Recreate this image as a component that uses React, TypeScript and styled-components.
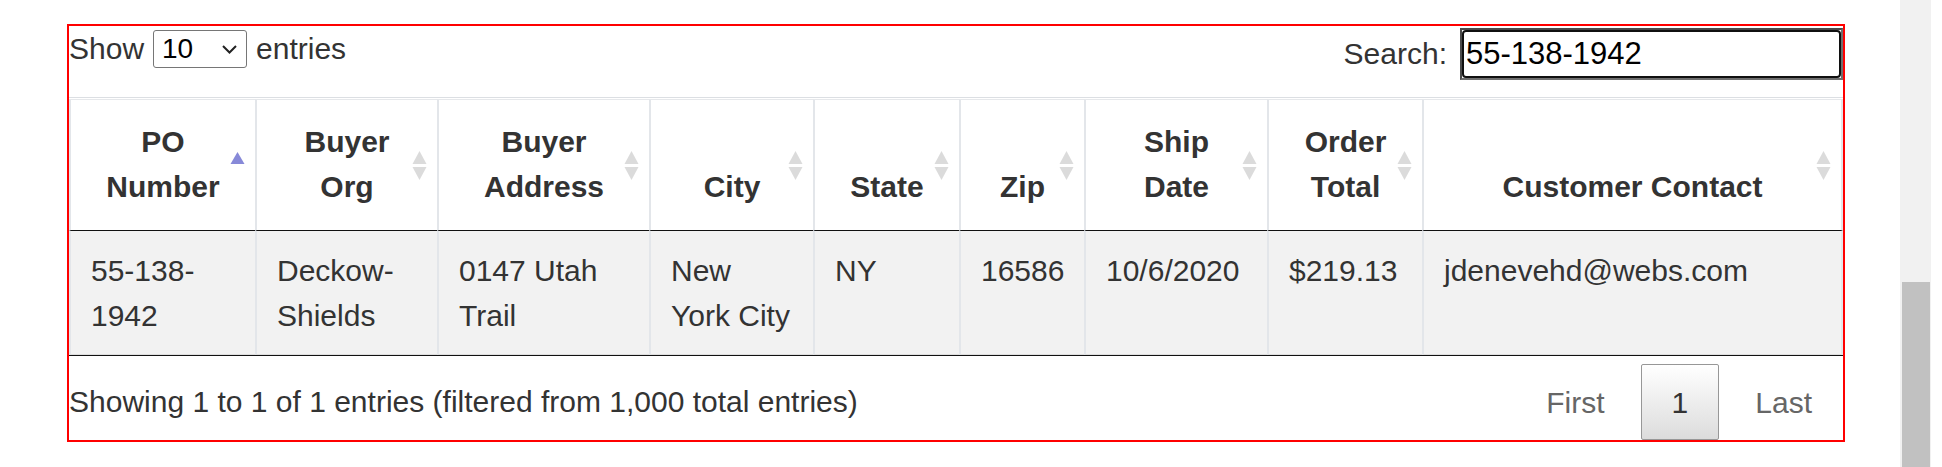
import styled, { createGlobalStyle } from "styled-components";

const GlobalStyle = createGlobalStyle`
  html, body {
    margin: 0;
    padding: 0;
    background: #fff;
  }
  body {
    font-family: "Liberation Sans", Arial, sans-serif;
    color: #333;
  }
`;

const Page = styled.div`
  display: flex;
  height: 467px;
  overflow: hidden;
`;

const Frame = styled.div`
  box-sizing: border-box;
  width: 1778px;
  margin: 24px 0 0 67px;
  border: 2px solid #ff0000;
  font-size: 30px;
  line-height: 45px;
  align-self: flex-start;
`;

const TopBar = styled.div`
  display: flex;
  justify-content: space-between;
  height: 71px;
`;

const LengthLabel = styled.label`
  display: flex;
  align-items: center;
  gap: 8px;
  height: 45px;
`;

const SelectWrap = styled.span`
  position: relative;
  display: inline-flex;
  margin: 0 1px;
`;

const LengthSelect = styled.select`
  box-sizing: border-box;
  width: 94px;
  height: 38px;
  padding: 0 0 0 8px;
  border: 1px solid #767676;
  border-radius: 3px;
  background: #fff;
  color: #000;
  font-family: "Liberation Sans", Arial, sans-serif;
  font-size: 28px;
  line-height: 36px;
  appearance: none;
  -webkit-appearance: none;
`;

const Chevron = styled.svg`
  position: absolute;
  right: 10px;
  top: 15px;
  pointer-events: none;
`;

const FilterLabel = styled.label`
  display: flex;
  align-items: baseline;
  gap: 13px;
  padding-top: 2px;
`;

const SearchBox = styled.span`
  display: inline-flex;
  border-style: solid;
  border-width: 2px;
  border-color: #4a4a4a #6f6f6f #6f6f6f #4a4a4a;
`;

const SearchInput = styled.input`
  box-sizing: border-box;
  width: 379px;
  height: 48px;
  padding: 0 2px;
  border: 2px solid #101010;
  border-radius: 4px;
  outline: none;
  background: #fff;
  color: #000;
  font-family: "Liberation Sans", Arial, sans-serif;
  font-size: 31px;
`;

const Table = styled.table`
  border-collapse: separate;
  border-spacing: 0;
  table-layout: fixed;
  width: 1774px;
  padding-top: 1px;
  border-top: 1px solid #dcdfe3;
  border-bottom: 1px solid #111;
`;

const HeadCell = styled.th<{ $w: number; $last?: boolean }>`
  position: relative;
  box-sizing: border-box;
  width: ${(p) => p.$w}px;
  padding: 19px 34px 21px;
  border-top: 1px solid #e6e8eb;
  border-left: 2px solid #e3e6ea;
  border-right: ${(p) => (p.$last ? "2px solid #e3e6ea" : "none")};
  border-bottom: 1px solid #111;
  font-weight: bold;
  text-align: center;
  vertical-align: bottom;
  color: #333;
`;

const SortIcon = styled.svg`
  position: absolute;
  right: 10px;
  top: 50%;
  margin-top: -14px;
`;

const Cell = styled.td<{ $last?: boolean }>`
  padding: 17px 18px 16px 20px;
  border-left: 2px solid #e3e6ea;
  border-right: ${(p) => (p.$last ? "2px solid #e3e6ea" : "none")};
  border-bottom: 1px solid #ddd;
  background: #f2f2f2;
  vertical-align: top;
  color: #333;
`;

const Footer = styled.div`
  display: flex;
  justify-content: space-between;
  align-items: flex-start;
`;

const Info = styled.div`
  padding-top: 23px;
`;

const Paginate = styled.div`
  display: flex;
  gap: 5px;
  padding-top: 8px;
`;

const PageButton = styled.a<{ $current?: boolean }>`
  display: block;
  padding: 15px 30px 14px;
  border: 1px solid ${(p) => (p.$current ? "#979797" : "transparent")};
  border-radius: 2px;
  background: ${(p) =>
    p.$current ? "linear-gradient(to bottom, #fff 0%, #dcdcdc 100%)" : "none"};
  color: ${(p) => (p.$current ? "#333" : "#666")};
  text-decoration: none;
  cursor: pointer;
`;

const Scrollbar = styled.div`
  display: flex;
  flex-direction: column;
  width: 31px;
  margin-left: auto;
  margin-right: 11px;
  background: #f1f1f1;
`;

const Thumb = styled.div`
  flex: 1;
  margin: 282px 1px 0 2px;
  background: #c1c1c1;
`;

const columns = [
  { label: "PO Number", w: 186, sort: "asc" },
  { label: "Buyer Org", w: 182 },
  { label: "Buyer Address", w: 212 },
  { label: "City", w: 164 },
  { label: "State", w: 146 },
  { label: "Zip", w: 125 },
  { label: "Ship Date", w: 183 },
  { label: "Order Total", w: 155 },
  { label: "Customer Contact", w: 421 },
];

const row = [
  "55-138-1942",
  "Deckow-Shields",
  "0147 Utah Trail",
  "New York City",
  "NY",
  "16586",
  "10/6/2020",
  "$219.13",
  "jdenevehd@webs.com",
];

function SortArrows({ dir }: { dir?: string }) {
  return (
    <SortIcon width="15" height="29" viewBox="0 0 15 29">
      {dir === "asc" ? (
        <polygon points="7.5,1 14.5,13 0.5,13" fill="#8789d8" />
      ) : (
        <>
          <polygon points="7.5,0 14.5,13 0.5,13" fill="#dbdbdb" />
          <polygon points="0.5,16 14.5,16 7.5,29" fill="#dbdbdb" />
        </>
      )}
    </SortIcon>
  );
}

export default function App() {
  return (
    <>
      <GlobalStyle />
      <Page>
        <Frame>
          <TopBar>
            <LengthLabel>
              <span>Show</span>
              <SelectWrap>
                <LengthSelect defaultValue="10">
                  <option value="10">10</option>
                  <option value="25">25</option>
                  <option value="50">50</option>
                  <option value="100">100</option>
                </LengthSelect>
                <Chevron width="15" height="9" viewBox="0 0 15 9">
                  <polyline
                    points="1,1 7.5,7.5 14,1"
                    fill="none"
                    stroke="#222"
                    strokeWidth="2"
                  />
                </Chevron>
              </SelectWrap>
              <span>entries</span>
            </LengthLabel>
            <FilterLabel>
              <span>Search:</span>
              <SearchBox>
                <SearchInput type="search" defaultValue="55-138-1942" />
              </SearchBox>
            </FilterLabel>
          </TopBar>
          <Table>
            <thead>
              <tr>
                {columns.map((c, i) => (
                  <HeadCell key={c.label} $w={c.w} $last={i === columns.length - 1}>
                    {c.label}
                    <SortArrows dir={c.sort} />
                  </HeadCell>
                ))}
              </tr>
            </thead>
            <tbody>
              <tr>
                {row.map((v, i) => (
                  <Cell key={i} $last={i === row.length - 1}>
                    {v}
                  </Cell>
                ))}
              </tr>
            </tbody>
          </Table>
          <Footer>
            <Info>Showing 1 to 1 of 1 entries (filtered from 1,000 total entries)</Info>
            <Paginate>
              <PageButton>First</PageButton>
              <PageButton $current>1</PageButton>
              <PageButton>Last</PageButton>
            </Paginate>
          </Footer>
        </Frame>
        <Scrollbar>
          <Thumb />
        </Scrollbar>
      </Page>
    </>
  );
}
